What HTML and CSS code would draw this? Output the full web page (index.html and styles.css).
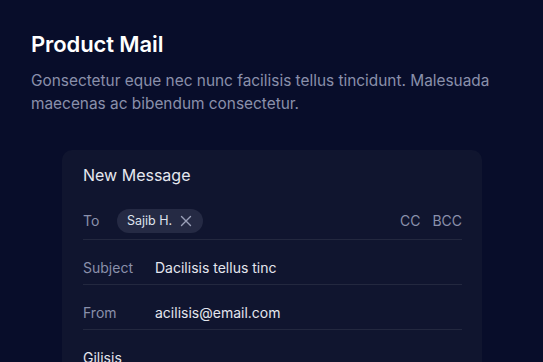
FILE: index.html
```html
<!DOCTYPE html>
<html>
<head>
<meta charset="utf-8">
<link rel="stylesheet" href="styles.css">
</head>
<body>
<div class="page">
  <h1 class="title">Product Mail</h1>
  <p class="lead">Gonsectetur eque nec nunc facilisis tellus tincidunt. Malesuada maecenas ac bibendum consectetur.</p>
  <div class="card">
    <div class="card-title">New Message</div>
    <div class="row row-to">
      <span class="label label-to">To</span>
      <span class="chip">Sajib H.
        <svg class="chip-x" width="12" height="12" viewBox="0 0 12 12"><path d="M1.5 1.5 L10.5 10.5 M10.5 1.5 L1.5 10.5" stroke="#9aa0b8" stroke-width="1.4" stroke-linecap="round" fill="none"/></svg>
      </span>
      <span class="spacer"></span>
      <span class="cc">CC</span>
      <span class="cc">BCC</span>
    </div>
    <div class="row">
      <span class="label">Subject</span>
      <span class="value">Dacilisis tellus tinc</span>
    </div>
    <div class="row">
      <span class="label">From</span>
      <span class="value">acilisis@email.com</span>
    </div>
    <div class="body-text">Gilisis</div>
  </div>
</div>
</body>
</html>
```
FILE: styles.css
```css
html, body {
  margin: 0;
  padding: 0;
  background: #080d2a;
  font-family: Inter, "Noto Sans", sans-serif;
  overflow: hidden;
}
.page {
  padding: 30px 31px 0 31px;
  height: 362px;
  box-sizing: border-box;
  overflow: hidden;
}
.title {
  margin: 0;
  font-size: 22px;
  line-height: 28px;
  font-weight: 600;
  color: #ffffff;
  letter-spacing: -0.1px;
}
.lead {
  margin: 11px 0 0 0;
  font-size: 15.4px;
  line-height: 23px;
  color: #8a90ab;
  max-width: 480px;
}
.card {
  margin: 35px 0 0 31px;
  width: 420px;
  background: #10152f;
  border-radius: 10px;
  padding: 15px 20px 0 21px;
  box-sizing: border-box;
  height: 230px;
}
.card-title {
  font-size: 16px;
  line-height: 20px;
  color: #e6e8ef;
}
.row {
  display: flex;
  align-items: center;
  border-bottom: 1px solid #23283f;
  padding: 18px 0 6px 0;
  font-size: 14px;
  line-height: 20px;
}
.row-to {
  padding: 24px 0 6px 0;
}
.label {
  width: 72px;
  color: #8a90ab;
  flex: none;
}
.label-to {
  width: 34px;
}
.value {
  color: #e4e6ee;
}
.chip {
  display: inline-flex;
  align-items: center;
  height: 24px;
  padding: 0 11px 0 10px;
  background: #252a44;
  border-radius: 12px;
  font-size: 12.5px;
  color: #dfe2ec;
  box-sizing: border-box;
}
.chip-x {
  margin-left: 8px;
}
.spacer {
  flex: 1;
}
.cc {
  color: #8a90ab;
  margin-left: 12px;
}
.body-text {
  padding-top: 18px;
  font-size: 14px;
  line-height: 20px;
  color: #e4e6ee;
}
```
